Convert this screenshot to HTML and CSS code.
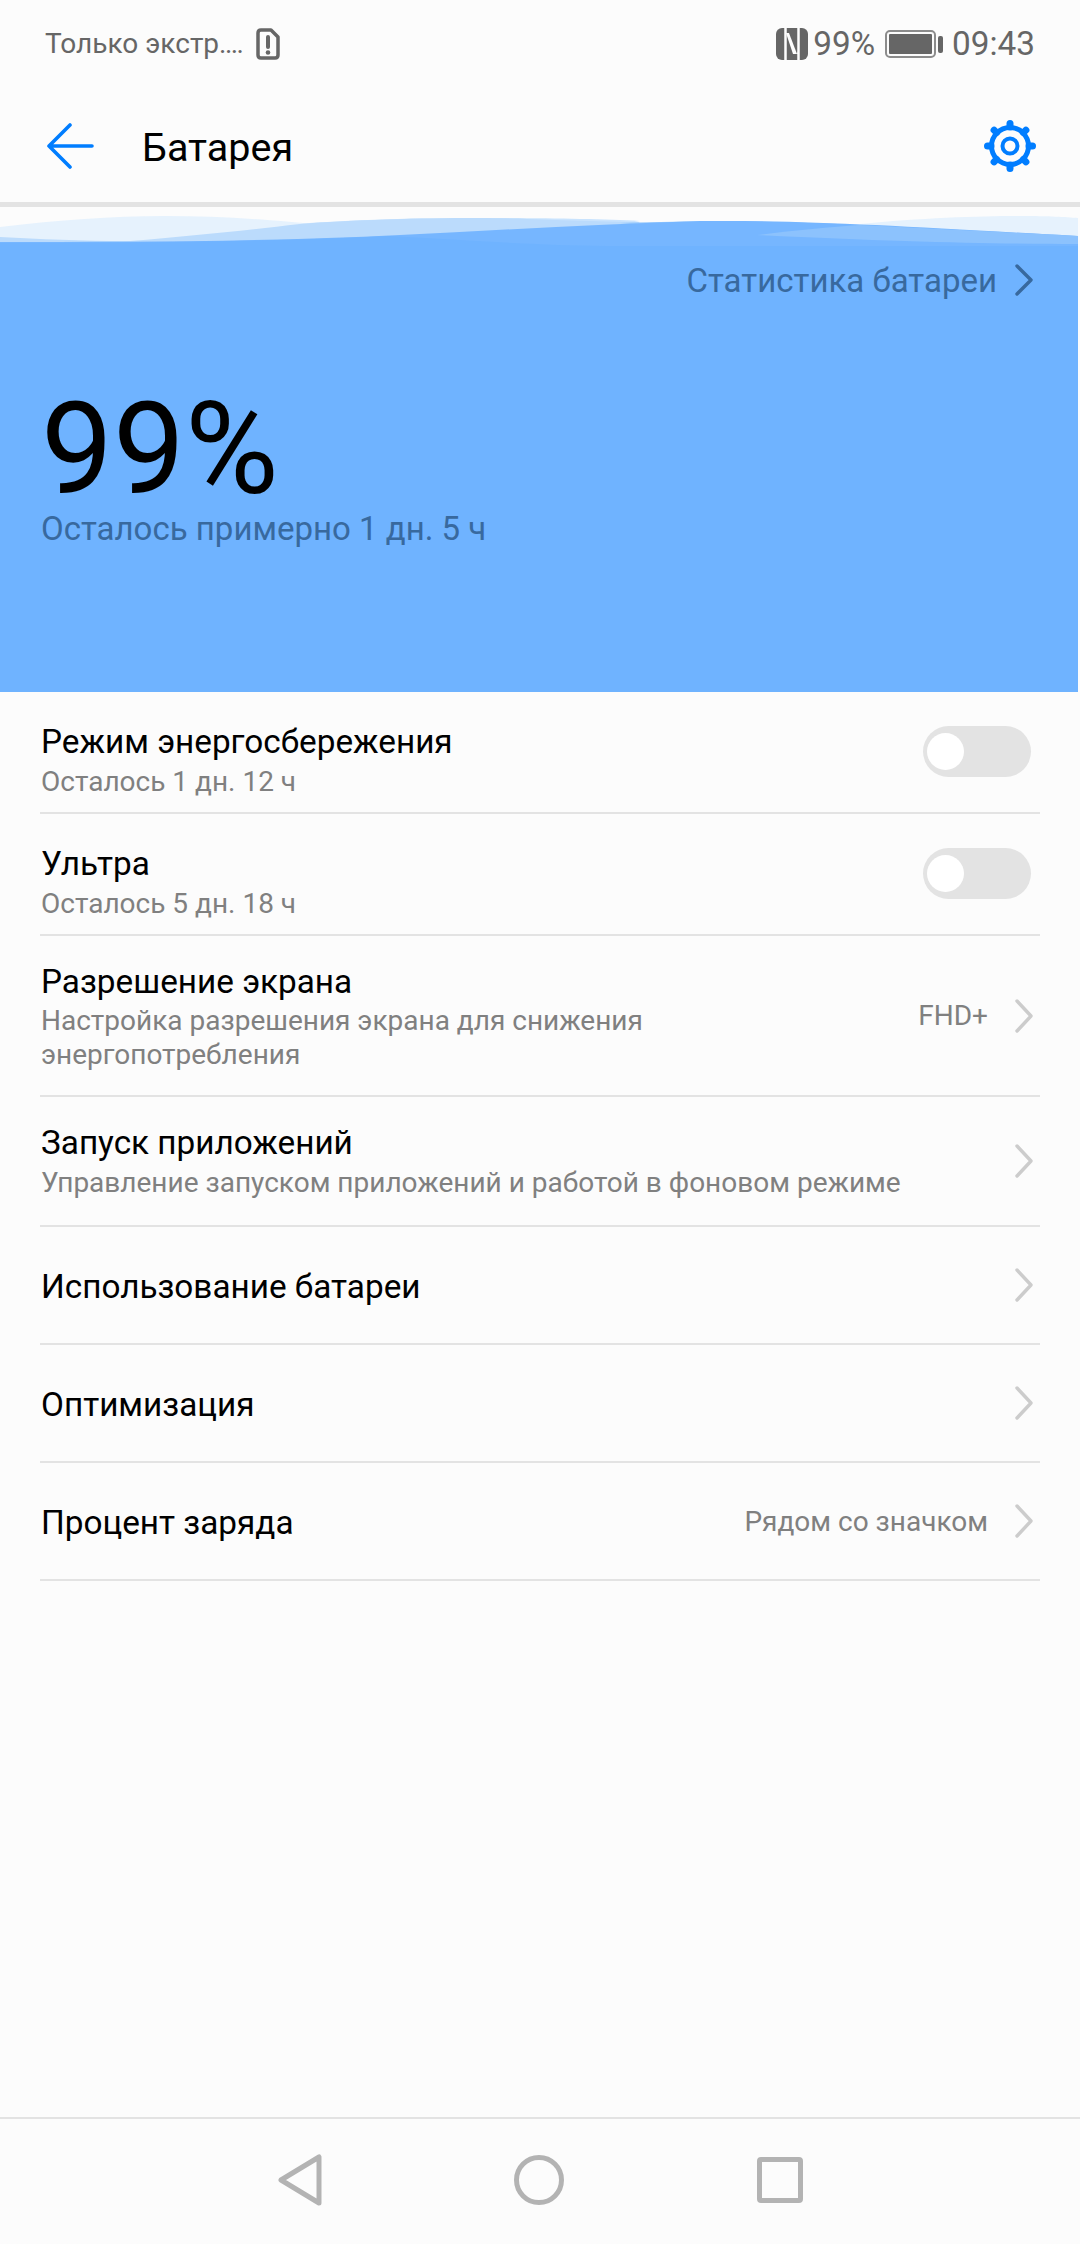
FILE: index.html
```html
<!DOCTYPE html>
<html lang="ru">
<head>
    <meta charset="UTF-8">
    <meta name="viewport" content="width=device-width, initial-scale=1.0">
    <title>Батарея</title>
    <link rel="stylesheet" href="styles.css">
</head>
<body>
    <div class="status-bar">
        <div class="status-group">
            <span class="status-carrier">Только экстр<span class="status-dots">....</span></span>
            <svg class="icon-sim" width="24" height="32" viewBox="0 0 24 32">
                <path d="M5 2 H15 L22 9 V27 Q22 30 19 30 H5 Q2 30 2 27 V5 Q2 2 5 2 Z" fill="none" stroke="#666" stroke-width="3.5" stroke-linejoin="round"/>
                <path d="M12 9 V19" stroke="#666" stroke-width="4" stroke-linecap="round"/>
                <circle cx="12" cy="24.5" r="2.3" fill="#666"/>
            </svg>
        </div>
        <div class="status-group">
            <svg class="icon-nfc" width="32" height="32" viewBox="0 0 32 32">
                <rect width="32" height="32" rx="6" fill="#666"/>
                <path d="M9.5 0 V32 M22.5 0 V32" stroke="#fdfdfd" stroke-width="2.5"/>
                <path d="M10 5 H15 L22 26 H17 Z" fill="#fdfdfd"/>
                <path d="M13 5 H17 L21 17 V26 Z" fill="#666"/>
                <path d="M11 15 L16 28 H11 Z" fill="#666"/>
            </svg>
            <span class="status-percent">99%</span>
            <svg class="icon-battery" width="58" height="28" viewBox="0 0 58 28">
                <rect x="1" y="1" width="49" height="26" rx="4" fill="none" stroke="#8c8c8c" stroke-width="2"/>
                <rect x="4" y="4" width="43" height="20" rx="1" fill="#666"/>
                <rect x="53" y="6" width="5" height="17" rx="2" fill="#666"/>
            </svg>
            <span class="status-time">09:43</span>
        </div>
    </div>

    <header class="app-bar">
        <svg class="icon-back" width="48" height="46" viewBox="0 0 48 46">
            <path d="M46 23 H3 M24 2 L3 23 L24 44" fill="none" stroke="#007dff" stroke-width="3.6" stroke-linecap="round" stroke-linejoin="round"/>
        </svg>
        <h1 class="app-title">Батарея</h1>
        <svg class="icon-gear" width="52" height="52" viewBox="-26 -26 52 52">
            <circle r="18.5" fill="none" stroke="#007dff" stroke-width="5"/>
            <circle r="7.5" fill="none" stroke="#007dff" stroke-width="4"/>
            <g stroke="#007dff" stroke-width="7" stroke-linecap="round">
                <path d="M0 -19 V-22.5"/>
                <path d="M0 19 V22.5"/>
                <path d="M-19 0 H-22.5"/>
                <path d="M19 0 H22.5"/>
                <path d="M13.4 -13.4 L15.9 -15.9"/>
                <path d="M-13.4 -13.4 L-15.9 -15.9"/>
                <path d="M13.4 13.4 L15.9 15.9"/>
                <path d="M-13.4 13.4 L-15.9 15.9"/>
            </g>
        </svg>
    </header>

    <section class="hero">
        <svg class="hero-wave" width="1078" height="34" viewBox="0 212 1078 34" preserveAspectRatio="none">
            <path d="M0 227 C60 220 110 216 165 216 C240 216 300 222 400 233 C480 241 550 246 620 246 C700 246 790 232 860 224 C920 218 980 216 1020 216 C1050 216 1065 217 1078 218 V246 H0 Z" fill="#e6f2fd"/>
            <path d="M300 224 C360 219 420 218 480 218 C540 218 600 219 640 221 L560 236 L400 233 Z" fill="#c9e3fd"/>
            <path d="M0 237 C40 239 80 241 130 241 C190 236 240 231 300 224 C350 220 420 218 480 218 C520 218 560 221 640 222 L600 246 H0 Z" fill="#bbdbfc"/>
            <path d="M620 223 C700 221 760 220 860 225 L840 240 L760 236 Z" fill="#9bcbfd"/>
            <path d="M0 242 C120 242 260 242 400 235 C500 230 600 224 700 221 C800 220 900 226 1078 236 V246 H0 Z" fill="#76b6ff"/>
            <path d="M757 235 C790 231 830 227 860 225 C920 228 1000 232 1078 236 V244 C1000 244 900 242 757 235 Z" fill="#8cc2fd"/>
            <path d="M0 243 C120 243 260 242 390 236 C480 241 550 246 620 246 H0 Z" fill="#6fb3ff"/>
        </svg>
        <div class="hero-body">
            <div class="hero-link">
                <span>Статистика батареи</span>
                <svg width="18" height="32" viewBox="0 0 18 32">
                    <path d="M2 2 L16 16 L2 30" fill="none" stroke="#38699e" stroke-width="3.4" stroke-linecap="round" stroke-linejoin="round"/>
                </svg>
            </div>
            <div class="hero-value">99%</div>
            <div class="hero-note">Осталось примерно 1 дн. 5 ч</div>
        </div>
    </section>

    <main class="settings">
        <div class="row row-toggle">
            <div class="row-text">
                <div class="row-title">Режим энергосбережения</div>
                <div class="row-sub">Осталось 1 дн. 12 ч</div>
            </div>
            <span class="toggle"><span class="toggle-knob"></span></span>
        </div>
        <div class="row row-toggle">
            <div class="row-text">
                <div class="row-title">Ультра</div>
                <div class="row-sub">Осталось 5 дн. 18 ч</div>
            </div>
            <span class="toggle"><span class="toggle-knob"></span></span>
        </div>
        <div class="row row-tall">
            <div class="row-text">
                <div class="row-title">Разрешение экрана</div>
                <div class="row-sub row-sub-wrap">Настройка разрешения экрана для снижения энергопотребления</div>
            </div>
            <span class="row-value">FHD+</span>
            <svg class="chevron" width="20" height="34" viewBox="0 0 20 34"><path d="M3 2 L17 17 L3 32" fill="none" stroke="#ccc" stroke-width="3.4" stroke-linecap="round" stroke-linejoin="round"/></svg>
        </div>
        <div class="row row-medium">
            <div class="row-text">
                <div class="row-title">Запуск приложений</div>
                <div class="row-sub">Управление запуском приложений и работой в фоновом режиме</div>
            </div>
            <svg class="chevron" width="20" height="34" viewBox="0 0 20 34"><path d="M3 2 L17 17 L3 32" fill="none" stroke="#ccc" stroke-width="3.4" stroke-linecap="round" stroke-linejoin="round"/></svg>
        </div>
        <div class="row row-single">
            <div class="row-text">
                <div class="row-title">Использование батареи</div>
            </div>
            <svg class="chevron" width="20" height="34" viewBox="0 0 20 34"><path d="M3 2 L17 17 L3 32" fill="none" stroke="#ccc" stroke-width="3.4" stroke-linecap="round" stroke-linejoin="round"/></svg>
        </div>
        <div class="row row-single">
            <div class="row-text">
                <div class="row-title">Оптимизация</div>
            </div>
            <svg class="chevron" width="20" height="34" viewBox="0 0 20 34"><path d="M3 2 L17 17 L3 32" fill="none" stroke="#ccc" stroke-width="3.4" stroke-linecap="round" stroke-linejoin="round"/></svg>
        </div>
        <div class="row row-single">
            <div class="row-text">
                <div class="row-title">Процент заряда</div>
            </div>
            <span class="row-value">Рядом со значком</span>
            <svg class="chevron" width="20" height="34" viewBox="0 0 20 34"><path d="M3 2 L17 17 L3 32" fill="none" stroke="#ccc" stroke-width="3.4" stroke-linecap="round" stroke-linejoin="round"/></svg>
        </div>
    </main>

    <nav class="nav-bar">
        <svg width="44" height="52" viewBox="0 0 44 52">
            <path d="M41 3 V49 L3 26 Z" fill="none" stroke="#b3b3b3" stroke-width="5" stroke-linejoin="round"/>
        </svg>
        <svg width="50" height="50" viewBox="0 0 50 50">
            <circle cx="25" cy="25" r="22.5" fill="none" stroke="#b3b3b3" stroke-width="5"/>
        </svg>
        <svg width="46" height="46" viewBox="0 0 46 46">
            <rect x="2.5" y="2.5" width="41" height="41" rx="1.5" fill="none" stroke="#b3b3b3" stroke-width="5"/>
        </svg>
    </nav>
</body>
</html>
```

FILE: styles.css
```css
body {
    margin: 0;
    width: 1080px;
    height: 2244px;
    display: flex;
    flex-direction: column;
    overflow: hidden;
    background-color: #fcfcfc;
    font-family: Roboto, "Noto Sans", sans-serif;
    color: #000;
}

/* status bar */
.status-bar {
    height: 87px;
    padding: 0 45px 3px;
    display: flex;
    justify-content: space-between;
    align-items: center;
    color: #666;
}

.status-group {
    display: flex;
    align-items: center;
}

.status-carrier {
    font-size: 28px;
}

.status-dots {
    letter-spacing: -1.6px;
}

.icon-sim {
    margin-left: 14px;
}

.status-percent {
    font-size: 33.3px;
    margin-left: 5px;
}

.icon-battery {
    margin-left: 10px;
}

.status-time {
    font-size: 33.3px;
    margin-left: 9px;
}

/* app bar */
.app-bar {
    height: 112px;
    padding: 0 44px 0 46px;
    display: flex;
    align-items: center;
    border-bottom: 5px solid #e3e3e3;
}

.app-title {
    flex: 1;
    margin: 0 0 0 48px;
    padding-top: 2px;
    font-size: 39.5px;
    font-weight: 400;
}

/* blue block */
.hero {
    padding-top: 5px;
    width: 1078px;
    height: 480px;
    display: flex;
    flex-direction: column;
}

.hero-wave {
    display: block;
    flex: none;
}

.hero-body {
    flex: 1;
    padding: 0 45px 0 41px;
    background-color: #6fb3ff;
    color: #38699e;
}

.hero-link {
    height: 68px;
    display: flex;
    justify-content: flex-end;
    align-items: center;
    gap: 18px;
    font-size: 33px;
}

.hero-value {
    margin-top: 80px;
    font-size: 128px;
    line-height: 110px;
    color: #000;
}

.hero-note {
    padding-top: 3px;
    font-size: 33px;
    line-height: 44px;
}

/* settings list */
.settings {
    flex: 1;
    padding: 0 40px;
}

.row {
    display: flex;
    align-items: center;
    padding-left: 1px;
    border-bottom: 2px solid #e3e3e3;
}

.row-toggle {
    height: 120px;
}

.row-toggle .row-text {
    padding-top: 16px;
}

.row-tall {
    height: 159px;
}

.row-medium {
    height: 128px;
}

.row-single {
    height: 116px;
}

.row-single .row-text {
    padding-top: 2px;
}

.row-text {
    flex: 1;
    min-width: 0;
}

.row-title {
    font-size: 33.3px;
    line-height: 43px;
}

.row-sub {
    margin-top: 1px;
    font-size: 28px;
    line-height: 36px;
    color: #808080;
}

.row-sub-wrap {
    width: 640px;
    line-height: 34px;
}

.row-value {
    margin-right: 26px;
    font-size: 28px;
    color: #808080;
}

.chevron {
    margin-right: 6px;
}

.toggle {
    width: 108px;
    height: 51px;
    margin: 0 9px 2px 0;
    padding: 0 4px;
    box-sizing: border-box;
    display: flex;
    align-items: center;
    border-radius: 26px;
    background-color: #e3e3e3;
}

.toggle-knob {
    width: 37px;
    height: 37px;
    border-radius: 50%;
    background-color: #fff;
}

/* navigation */
.nav-bar {
    flex: none;
    height: 127px;
    padding-bottom: 4px;
    box-sizing: border-box;
    display: flex;
    justify-content: center;
    align-items: center;
    gap: 192.5px;
    border-top: 2px solid #e3e3e3;
}
```
